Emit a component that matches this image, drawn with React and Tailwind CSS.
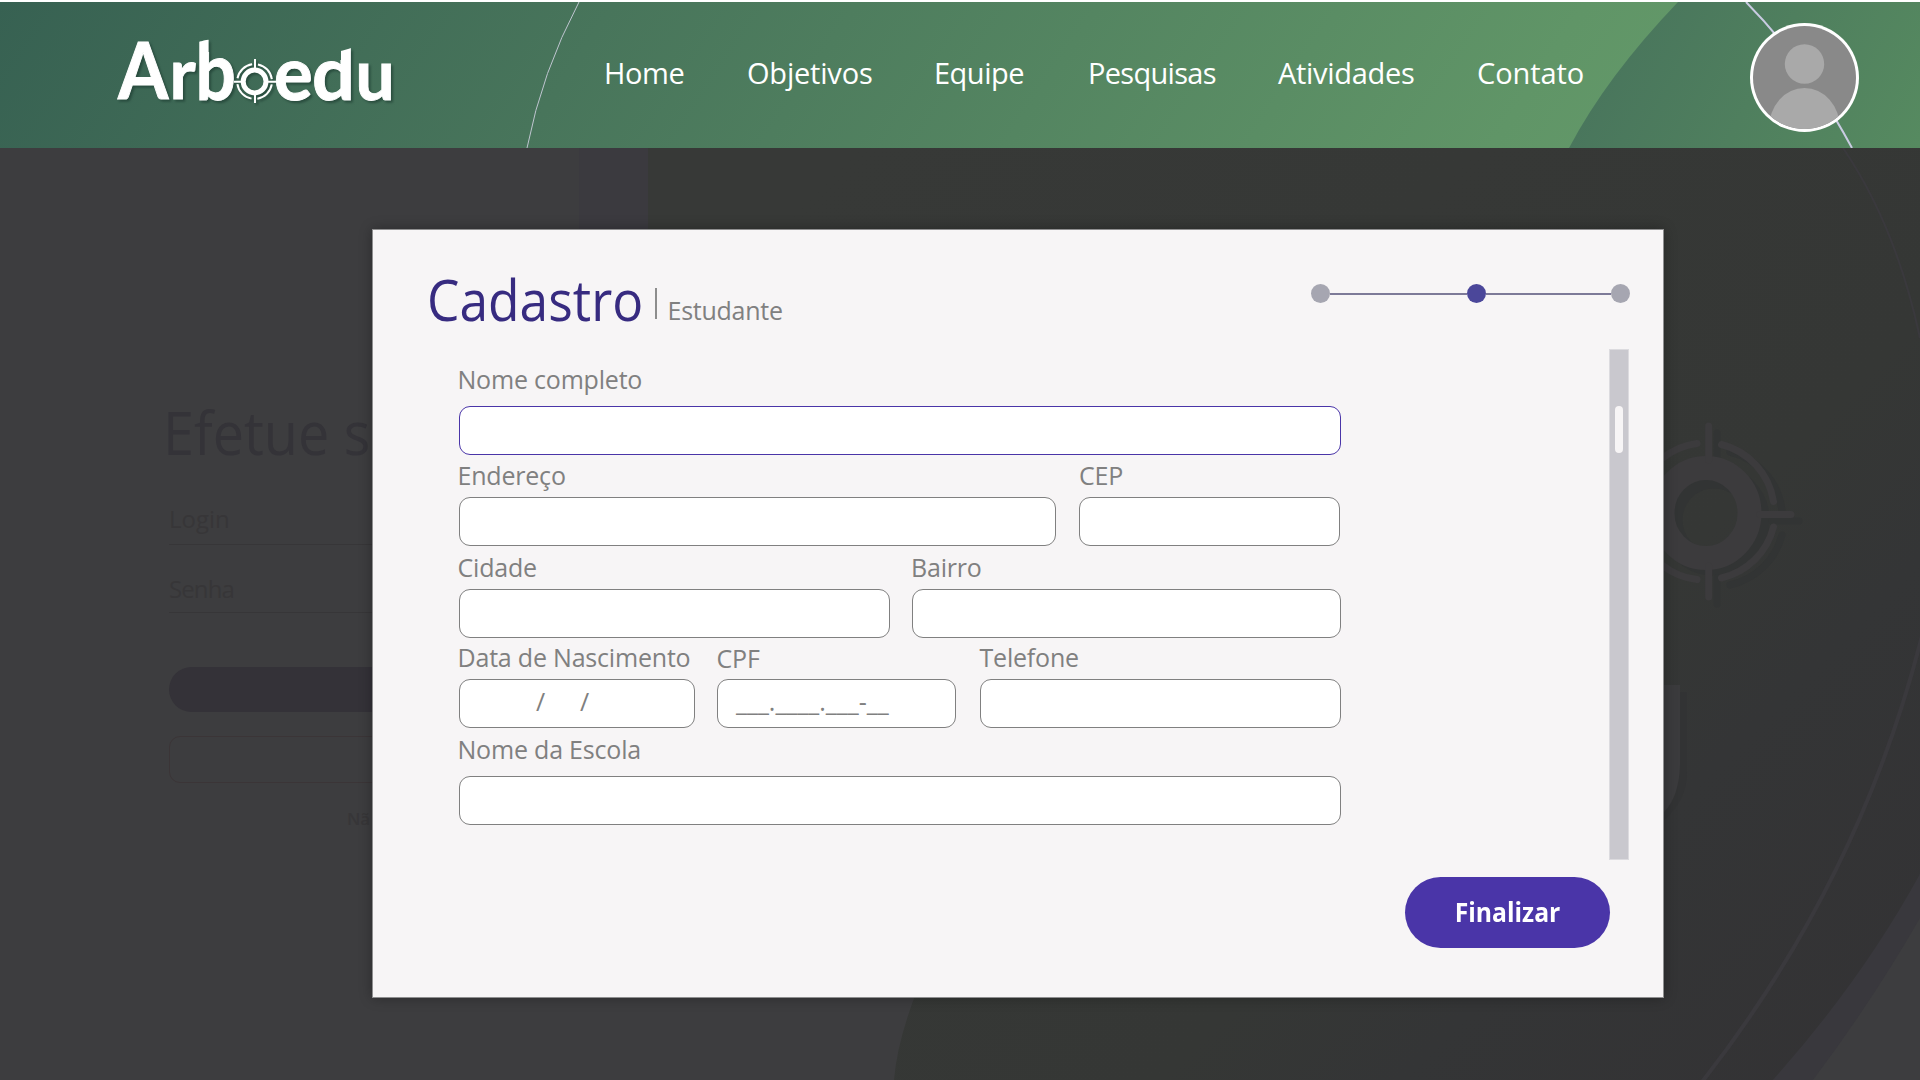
import React from "react";

const NAV = [
  { label: "Home", className: "w-[143px] tracking-[-0.4px]" },
  { label: "Objetivos", className: "w-[187px] tracking-[-0.2px]" },
  { label: "Equipe", className: "w-[154px] tracking-[-0.5px]" },
  { label: "Pesquisas", className: "w-[190px] tracking-[-0.7px]" },
  { label: "Atividades", className: "w-[199px] tracking-[-0.3px]" },
  { label: "Contato", className: "w-[110px] tracking-[-0.1px]" },
];

function Logo() {
  return (
    <svg
      className="ml-[100px] h-[146px] w-[310px] shrink-0 drop-shadow-[2px_2px_1px_rgba(25,55,45,0.6)]"
      viewBox="100 2 310 146"
      fill="#ffffff"
    >
      <defs>
        <clipPath id="b-stem">
          <path d="M196 42.5 L208.5 39.5 V52 H240 V105 H196 Z" />
        </clipPath>
        <clipPath id="d-stem">
          <path d="M310 60 H341 V51 L355 47 V105 H310 Z" />
        </clipPath>
      </defs>
      <g fontFamily="Lato, sans-serif" fontWeight="700" fontSize="78" stroke="#ffffff" strokeWidth="1">
        <text transform="translate(117.9 99) scale(.93 1)">A</text>
        <text transform="translate(169.5 99) scale(.9 .9)">r</text>
        <g clipPath="url(#b-stem)">
          <text transform="translate(195.4 100) scale(.91 1.03)">b</text>
        </g>
        <text transform="translate(274 100) scale(.93 .96)">e</text>
        <g clipPath="url(#d-stem)">
          <text transform="translate(312 100) scale(.97 .96)">d</text>
        </g>
        <text transform="translate(355.5 100) scale(.89 .91)">u</text>
      </g>
      <g fill="none" stroke="#ffffff">
        <circle cx="254.6" cy="81.5" r="11.4" strokeWidth="5" />
        <circle cx="254.6" cy="81.5" r="17.4" strokeWidth="2" strokeDasharray="21.3 6" strokeDashoffset="-3" />
        <path d="M255 59v10M255 94v9M234 81.8h9M266 81.8h12" strokeWidth="2" />
      </g>
    </svg>
  );
}

function Avatar() {
  return (
    <div className="relative ml-auto mr-[61px] mt-[21px] h-[109px] w-[109px] overflow-hidden rounded-full bg-white">
      <svg viewBox="0 0 109 109" className="h-full w-full">
        <clipPath id="face">
          <circle cx="54.5" cy="54.5" r="51.5" />
        </clipPath>
        <g clipPath="url(#face)">
          <rect width="109" height="109" fill="#898989" />
          <circle cx="54.5" cy="41" r="19.7" fill="#a9a9a9" />
          <ellipse cx="54.5" cy="105" rx="35.5" ry="40" fill="#a9a9a9" />
        </g>
      </svg>
    </div>
  );
}

function Header() {
  return (
    <header className="relative h-[148px] w-full border-t-2 border-white">
      <svg className="absolute inset-0 h-[146px] w-full" viewBox="0 2 1920 146">
        <defs>
          <linearGradient id="bar" gradientUnits="userSpaceOnUse" x1="0" y1="0" x2="1300" y2="860">
            <stop offset="0" stopColor="#376152" />
            <stop offset=".33" stopColor="#48755b" />
            <stop offset=".85" stopColor="#609567" />
            <stop offset="1" stopColor="#659b6a" />
          </linearGradient>
          <linearGradient id="disc" gradientUnits="userSpaceOnUse" x1="1600" y1="20" x2="1900" y2="180">
            <stop offset="0" stopColor="#48745c" />
            <stop offset="1" stopColor="#568a60" />
          </linearGradient>
        </defs>
        <rect y="2" width="1920" height="146" fill="url(#bar)" />
        <path d="M1678 2 Q1607 76 1569 148 H1920 V2 Z" fill="url(#disc)" />
        <path d="M579 2 Q542 72 527 148" fill="none" stroke="#bfc5d0" strokeWidth="1" />
        <path d="M1746 2 Q1806 63 1852 148" fill="none" stroke="#c9cbe2" strokeWidth="2" />
      </svg>
      <div className="relative flex h-[146px] items-start">
        <Logo />
        <nav className="ml-[194px] mt-[51px] flex font-['Open_Sans',sans-serif] text-[29px] leading-[40px] text-white">
          {NAV.map((n) => (
            <a key={n.label} className={n.className}>
              {n.label}
            </a>
          ))}
        </nav>
        <Avatar />
      </div>
    </header>
  );
}

function Backdrop() {
  return (
    <svg className="absolute inset-0 h-[932px] w-full" viewBox="0 148 1920 932">
      <defs>
        <linearGradient id="shade" gradientUnits="userSpaceOnUse" x1="700" y1="300" x2="1700" y2="1300">
          <stop offset="0" stopColor="#373937" />
          <stop offset=".62" stopColor="#353735" />
          <stop offset=".74" stopColor="#343536" />
          <stop offset="1" stopColor="#333234" />
        </linearGradient>
      </defs>
      <rect y="148" width="1920" height="932" fill="#3d3d3f" />
      <path d="M579 148 V300 H700 V148 Z" fill="#3b3a3f" />
      <path d="M1920 874 V918 Q1873 1000 1813 1080 H1760 Z" fill="#39383d" />
      <path d="M648 148 V260 L930 960 Q898 1030 894 1080 H1773 Q1862 980 1920 874 V148 Z" fill="url(#shade)" />
      <g fill="none" stroke="#3a393d">
        <path d="M1843 148 Q1896 226 1920 338" strokeWidth="2" />
        <path d="M1922 636 Q1860 880 1702 1082" strokeWidth="4" />
      </g>
      <g transform="translate(8 7)" fill="none" stroke="#323434" strokeWidth="7" strokeLinecap="round">
        <circle cx="1706" cy="513" r="43.5" strokeWidth="24" />
        <path d="M1722 445 A69 69 0 0 1 1774 503M1774 528 A69 69 0 0 1 1722 578M1709 426V455M1709 571V597M1764 514H1791" />
      </g>
      <g fill="none" stroke="#3c3b3d" strokeWidth="7" strokeLinecap="round">
        <ellipse cx="1706" cy="513" rx="43.5" ry="45" strokeWidth="24" />
        <path d="M1721.5 444.5 A70 70 0 0 1 1773.5 501.5M1773.5 527 A70 70 0 0 1 1721.5 578M1697 443.5 A70 70 0 0 0 1640 490M1697 579.5 A70 70 0 0 1 1640 535" />
        <path d="M1708.7 426V460M1708.7 566V597M1760 514.5H1791" />
      </g>
      <path d="M1600 692 H1687 V772 Q1687 800 1664 820 H1600 Z" fill="#323334" />
      <path d="M1600 685 H1680 V765 Q1679 797 1664 812 H1600 Z" fill="#3b3b3d" />
    </svg>
  );
}

function LoginBehind() {
  return (
    <section className="relative ml-[163px] flex w-[400px] flex-col whitespace-nowrap pt-[244px] font-['Open_Sans',sans-serif] text-[#373638]">
      <h1 className="h-[80px] origin-left scale-x-[0.928] text-[60px] leading-[80px] text-[#343338]">Efetue s</h1>
      <div className="ml-[6px] mt-[32px] h-[41px] border-b border-[#373638] text-[24px] leading-[29px]">Login</div>
      <div className="ml-[6px] mt-[27px] h-[41px] border-b border-[#373638] text-[24px] leading-[33px] tracking-[-0.9px]">
        Senha
      </div>
      <div className="ml-[6px] mt-[54px] h-[45px] w-[320px] rounded-full bg-[#343238]" />
      <div className="ml-[6px] mt-[24px] h-[47px] w-[320px] rounded-[11px] border border-[#3b3537]" />
      <p className="ml-[184px] mt-[24px] text-[17px] font-semibold leading-[24px]">Nã</p>
    </section>
  );
}

function Field({ label, className = "", gap = "mt-2", shift = "ml-[-1.5px]", focus = false, children }) {
  return (
    <label className={`flex flex-col ${className}`}>
      <span className={`whitespace-nowrap text-[25px] leading-7 tracking-[-0.2px] ${shift}`}>{label}</span>
      <span
        className={`flex h-[49px] items-center whitespace-pre rounded-[11px] border bg-white pb-[3px] text-[25px] ${gap} ${
          focus ? "border-[#4a35a8]" : "border-[#808080]"
        }`}
      >
        {children}
      </span>
    </label>
  );
}

function Stepper() {
  return (
    <div className="mt-[54px] flex h-[19px] items-center">
      <span className="h-[19px] w-[19px] rounded-full bg-[#a6a6b1]" />
      <span className="h-0.5 w-[137px] bg-[#7d7a98]" />
      <span className="h-[19px] w-[19px] rounded-full bg-[#4b479a]" />
      <span className="h-0.5 w-[125px] bg-[#7d7a98]" />
      <span className="h-[19px] w-[19px] rounded-full bg-[#a6a6b1]" />
    </div>
  );
}

function Modal() {
  return (
    <div className="absolute left-[372px] top-[81px] flex h-[769px] w-[1292px] flex-col border border-[#8f8f90] bg-[#f7f5f6] font-['Open_Sans',sans-serif] text-[#808080] shadow-[0_0_12px_rgba(0,0,0,0.3)]">
      <div className="flex h-[119px] items-start justify-between pl-[54px] pr-[33px]">
        <div className="flex items-start">
          <h2 className="mt-[37px] w-[228px] origin-left scale-x-[0.92] text-[56px] leading-[64px] text-[#372b80]">
            Cadastro
          </h2>
          <span className="mt-[58px] h-[31px] w-[1.5px] bg-[#8d8d8d]" />
          <span className="ml-[11px] mt-[66px] text-[25px] leading-7 tracking-[-0.25px]">Estudante</span>
        </div>
        <Stepper />
      </div>
      <div className="flex">
        <form className="ml-[86px] flex w-[881.5px] flex-col pt-4">
          <Field label="Nome completo" gap="mt-[13px]" focus />
          <div className="mt-1.5 flex gap-[23px]">
            <Field label="Endereço" className="w-[597px]" />
            <Field label="CEP" shift="ml-0" className="w-[261px]" />
          </div>
          <div className="mt-[7px] flex gap-[22px]">
            <Field label="Cidade" className="w-[430.5px]" />
            <Field label="Bairro" shift="ml-[-0.5px]" className="w-[429px]" />
          </div>
          <div className="mt-[5px] flex">
            <Field label="Data de Nascimento" className="w-[235.5px]">
              <span className="ml-[76px] w-[44px]">/</span>
              <span>/</span>
            </Field>
            <Field label="CPF" shift="ml-[-0.5px] relative top-px" className="ml-[22.5px] w-[238.5px]">
              <span className="ml-[18px]">___.____.___-__</span>
            </Field>
            <Field label="Telefone" shift="ml-0" className="ml-6 w-[361px]" />
          </div>
          <Field label="Nome da Escola" className="mt-[7px]" gap="mt-[13px]" />
        </form>
        <div className="ml-[268.5px] h-[511px] w-5 border border-[#dcdbdf] bg-[#c9c8ce] px-[5px] pt-14">
          <div className="h-[47px] w-2 rounded-[4px] bg-[#f7f5f6]" />
        </div>
      </div>
      <button className="ml-[1031.5px] mt-[17px] flex h-[71px] w-[205px] items-center justify-center rounded-full bg-[#4a35a8] pl-0.5 text-[26px] font-bold text-white">
        <span className="scale-x-[0.95]">Finalizar</span>
      </button>
    </div>
  );
}

export default function App() {
  return (
    <div className="h-[1080px] w-[1920px] overflow-hidden bg-[#3d3d3f]">
      <Header />
      <main className="relative h-[932px]">
        <Backdrop />
        <LoginBehind />
        <Modal />
      </main>
    </div>
  );
}
